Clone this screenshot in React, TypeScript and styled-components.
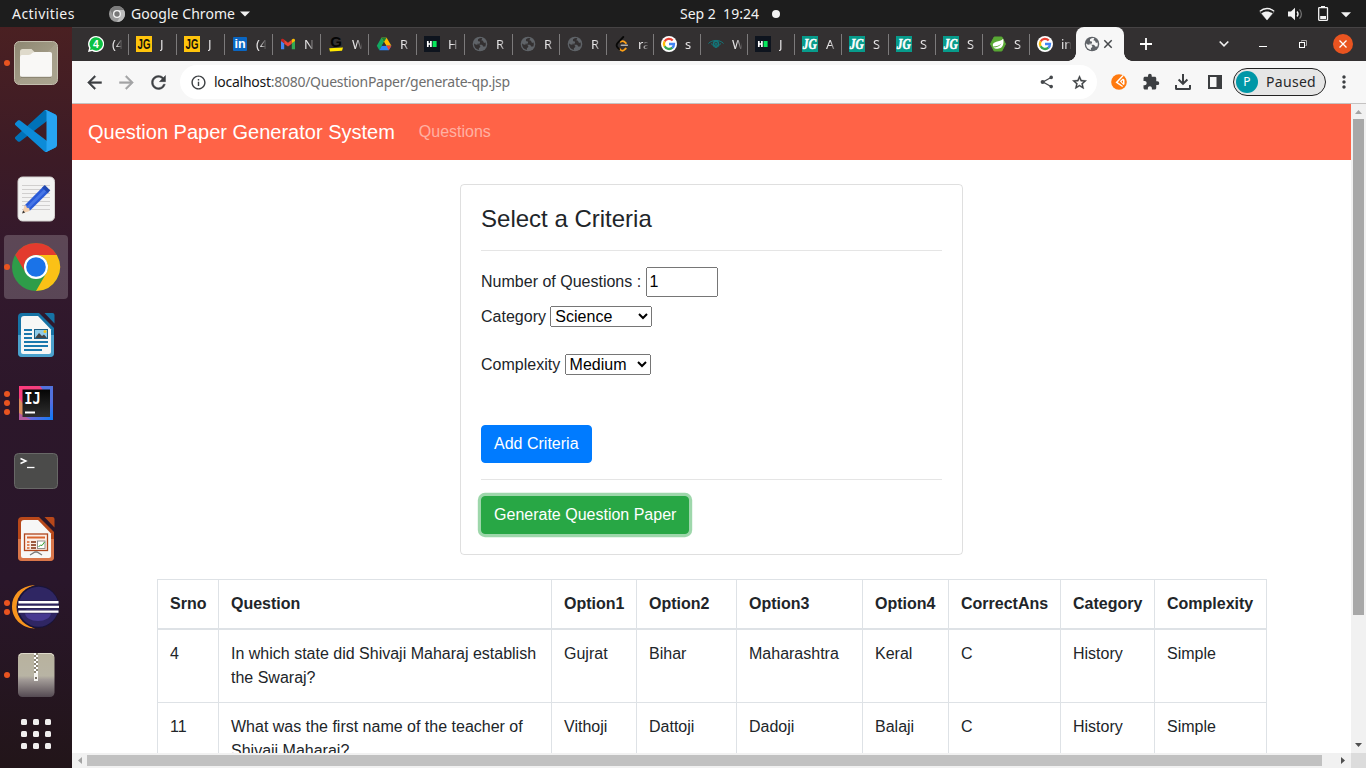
import React from "react";
import styled, { createGlobalStyle } from "styled-components";
import { MdArrowBack, MdArrowForward, MdRefresh, MdInfoOutline, MdStarBorder, MdExtension, MdMoreVert } from "react-icons/md";

const GlobalStyle = createGlobalStyle`
  *, *::before, *::after { box-sizing: border-box; }
  body { margin: 0; overflow: hidden; font-family: "Liberation Sans", Arial, sans-serif; }
  svg { display: block; flex: none; }
`;

const uiFont = `"Noto Sans", "Open Sans", sans-serif`;

/* ---------- desktop shell ---------- */

const Desktop = styled.div`
  width: 1366px;
  height: 768px;
  display: flex;
  flex-direction: column;
  overflow: hidden;
  background: #fff;
`;

const TopBar = styled.header`
  height: 27px;
  flex: none;
  display: flex;
  align-items: center;
  background: #1d1d1d;
  color: #f2f2f2;
  font: 14px/27px ${uiFont};
  white-space: nowrap;
`;

const TopLeft = styled.div`
  width: 680px;
  padding-left: 12px;
  display: flex;
  align-items: center;
`;

const TopLabel = styled.span<{ $w: number; $ml?: number; $mr?: number; $track?: number }>`
  width: ${(p) => p.$w}px;
  margin-left: ${(p) => p.$ml ?? 0}px;
  margin-right: ${(p) => p.$mr ?? 0}px;
  letter-spacing: ${(p) => p.$track ?? 0}px;
`;

const TopRight = styled.div`
  margin-left: auto;
  padding-right: 15px;
  display: flex;
  align-items: center;
`;

const Body = styled.div`
  flex: 1;
  min-height: 0;
  display: flex;
`;

/* ---------- dock ---------- */

const Dock = styled.nav`
  width: 72px;
  flex: none;
  display: flex;
  flex-direction: column;
  align-items: center;
  gap: 4px;
  padding-top: 4px;
  background: linear-gradient(#4a2022 0, #3c1b26 18%, #33192d 31%, #2c172a 50%, #29162a 75%, #221519 100%);
`;

const DockItem = styled.div<{ $active?: boolean }>`
  position: relative;
  width: 64px;
  height: 64px;
  border-radius: 4px;
  background: ${(p) => (p.$active ? "rgba(255,255,255,.2)" : "none")};
`;

const RunDots = styled.div`
  position: absolute;
  left: 0;
  top: 0;
  height: 64px;
  display: flex;
  flex-direction: column;
  justify-content: center;
  gap: 3px;
`;

const RunDot = styled.i`
  width: 6px;
  height: 6px;
  border-radius: 50%;
  background: #e95420;
`;

const AppsGrid = styled.div`
  display: grid;
  grid-template-columns: repeat(3, 6px);
  gap: 6px;
  margin-top: 8px;
`;

const AppsDot = styled.i`
  height: 6px;
  border-radius: 1.5px;
  background: #f0eeee;
`;

/* ---------- browser ---------- */

const Browser = styled.main`
  flex: 1;
  min-width: 0;
  display: flex;
  flex-direction: column;
`;

const TabStrip = styled.div`
  height: 34px;
  flex: none;
  display: flex;
  padding-left: 9px;
  background: #333031;
  box-shadow: inset 0 1px #464344;
`;

const TabCell = styled.div<{ $w: number; $last?: boolean }>`
  width: ${(p) => p.$w}px;
  height: 34px;
  flex: none;
  display: flex;
  align-items: center;
  padding-left: 7px;
  background: linear-gradient(#7c7a7b, #7c7a7b) ${(p) => (p.$last ? "100px" : "100%")} 7px / 1px 21px no-repeat;
`;

const TabTitle = styled.span`
  width: 10px;
  margin-left: 8px;
  overflow: hidden;
  white-space: nowrap;
  font: 13px/18px ${uiFont};
  color: #e6e4e5;
  mask-image: linear-gradient(90deg, #000 45%, transparent 105%);
`;

const ActiveTab = styled.div`
  position: relative;
  width: 48px;
  height: 34px;
  flex: none;
  display: flex;
  align-items: center;
  gap: 3px;
  padding-left: 8px;
  border-radius: 8px 8px 0 0;
  background: #f7f7f7;
  &::before, &::after {
    content: "";
    position: absolute;
    bottom: 0;
    width: 8px;
    height: 8px;
  }
  &::before { left: -8px; background: radial-gradient(circle at 0 0, transparent 7.5px, #f7f7f7 8px); }
  &::after { right: -8px; background: radial-gradient(circle at 100% 0, transparent 7.5px, #f7f7f7 8px); }
`;

const WindowButtons = styled.div`
  flex: 1;
  display: flex;
  align-items: center;
`;

const StripSlot = styled.div<{ $w: number; $ml?: number }>`
  width: ${(p) => p.$w}px;
  margin-left: ${(p) => p.$ml ?? 0}px;
  flex: none;
  display: flex;
  justify-content: center;
`;

const Toolbar = styled.div`
  height: 43px;
  flex: none;
  display: flex;
  align-items: center;
  padding-left: 6px;
  background: #f7f7f7;
  border-bottom: 1px solid #c4c2c1;
  color: #3c3f42;
`;

const Slot = styled.div<{ $color?: string; $bold?: boolean }>`
  width: 32px;
  flex: none;
  display: flex;
  justify-content: center;
  color: ${(p) => p.$color ?? "inherit"};
  path:not([fill="none"]) { stroke-width: ${(p) => (p.$bold ? 0.5 : 0)}; }
  path[fill="none"] { stroke-width: 0; }
`;

const Omnibox = styled.div`
  width: 917px;
  height: 34px;
  margin: 0 6px;
  flex: none;
  display: flex;
  align-items: center;
  padding: 0 2px;
  border-radius: 17px;
  background: #fff;
`;

const Url = styled.div`
  flex: 1;
  font: 14px/20px ${uiFont};
  letter-spacing: -0.27px;
  color: #6e6e6e;
  b { font-weight: 400; color: #161616; }
`;

const ProfilePill = styled.div`
  width: 93px;
  height: 28px;
  margin: 0 2px;
  flex: none;
  display: flex;
  align-items: center;
  padding-left: 2px;
  border: 1px solid #222;
  border-radius: 14px;
  background: #e6e6e6;
  color: #26282b;
  font: 14px/20px ${uiFont};
  letter-spacing: 0.3px;
`;

const Avatar = styled.span`
  width: 22px;
  height: 22px;
  margin-right: 8px;
  border-radius: 50%;
  background: #0097a7;
  color: #fff;
  font-size: 12px;
  line-height: 22px;
  text-align: center;
`;

const PageArea = styled.div`
  flex: 1;
  min-height: 0;
  display: grid;
  grid-template: minmax(0, 1fr) 15px / minmax(0, 1fr) 15px;
`;

const Viewport = styled.div`
  overflow: hidden;
  background: #fff;
  color: #212529;
  font-size: 16px;
  line-height: 24px;
`;

const VScroll = styled.div`
  display: flex;
  flex-direction: column;
  align-items: center;
  background: #f1f1f1;
`;

const HScroll = styled.div`
  display: flex;
  align-items: center;
  background: #f1f1f1;
`;

const VThumb = styled.div`
  width: 11px;
  height: 496px;
  margin-bottom: auto;
  background: #a8a8a8;
`;

const HThumb = styled.div`
  width: 1235px;
  height: 11px;
  margin-right: auto;
  background: #c1c1c1;
`;

const ScrollCorner = styled.div`
  background: #dcdcdc;
`;

/* ---------- web page ---------- */

const Navbar = styled.div`
  height: 56px;
  display: flex;
  align-items: center;
  padding: 0 16px;
  background: #ff6347;
`;

const Brand = styled.span`
  margin-right: 24px;
  font-size: 20px;
  line-height: 30px;
  color: #fff;
`;

const NavLink = styled.span`
  color: rgba(255, 255, 255, 0.5);
`;

const Card = styled.section`
  width: 502.9px;
  height: 371px;
  margin: 24px auto;
  padding: 20px;
  border: 1px solid rgba(0, 0, 0, 0.125);
  border-radius: 4px;
`;

const CardTitle = styled.h4`
  margin: 0;
  font-size: 24px;
  font-weight: 500;
  line-height: 28.8px;
`;

const Divider = styled.hr`
  margin: 16px 0;
  border: 0;
  border-top: 1px solid rgba(0, 0, 0, 0.1);
`;

const FormRow = styled.label<{ $h: number; $mb: number }>`
  height: ${(p) => p.$h}px;
  margin-bottom: ${(p) => p.$mb}px;
  display: flex;
  align-items: baseline;
  gap: 4.4px;
`;

const NumberField = styled.input`
  width: 72px;
  height: 30px;
  font: 16px "Liberation Sans", Arial, sans-serif;
`;

const Picker = styled.select<{ $w: number }>`
  width: ${(p) => p.$w}px;
  height: 21px;
  font: 16px "Liberation Sans", Arial, sans-serif;
`;

/* a 21px line box keeps the label on the select's baseline */
const PickerRow = styled(FormRow)`
  line-height: 21px;
`;

const Button = styled.button<{ $color: string; $ring?: string }>`
  display: block;
  height: 38px;
  padding: 6px 12px;
  border: 1px solid ${(p) => p.$color};
  border-radius: 4px;
  background: ${(p) => p.$color};
  color: #fff;
  font: 16px/24px "Liberation Sans", Arial, sans-serif;
  box-shadow: ${(p) => (p.$ring ? `0 0 0 3.2px ${p.$ring}` : "none")};
`;

const QuestionTable = styled.table`
  width: 1109px;
  margin: 0 85px;
  table-layout: fixed;
  border-collapse: collapse;
  border: 1px solid #dee2e6;
`;

const Th = styled.th<{ $w: number }>`
  width: ${(p) => p.$w}px;
  padding: 12px;
  border: 1px solid #dee2e6;
  border-bottom-width: 2px;
  text-align: left;
  white-space: nowrap;
`;

const Td = styled.td`
  padding: 12px;
  border: 1px solid #dee2e6;
  vertical-align: top;
`;

/* ---------- favicons ---------- */

const Globe = ({ cut = "#333031" }: { cut?: string }) => (
  <svg width="16" height="16" viewBox="0 0 16 16">
    <circle cx="8" cy="8" r="7.3" fill="#5f6368" />
    <path d="M9.300 2.100C7.200 2 5.900 3 5.900 4.300c0 1 .8 1.300 2.100 1.300v1.200c0 .8-.5 1-1.500 1H5.300v.9h3.600c1.300 0 2 .7 2.200 1.700h2.300c.5-1.300.6-2.700.2-4.100-.9 1-2 .6-2.200-.6-.1-.9-.7-1.200-1.900-1.200 0-1 .7-1.200.7-2.200Z" fill={cut} />
    <path d="M2.100 7.300c1.200 1.500 2.300 1.600 4.200 1.600 1.500 0 2 .6 2 1.700 0 .9-.6 1.200-1.400 1.200v2.100C3.800 13.400 1.800 10.700 2.100 7.300Z" fill={cut} />
  </svg>
);

const WhatsApp = () => (
  <svg width="16" height="16" viewBox="0 0 16 16">
    <path d="M8 0a8 8 0 1 1-3.8 15L0 16l1.1-4A8 8 0 0 1 8 0Z" fill="#fff" />
    <path d="M8 1.3A6.7 6.7 0 1 1 4.5 13.6L2 14.1l.6-2.4A6.7 6.7 0 0 1 8 1.3Z" fill="#0cc143" />
    <text x="8" y="11.8" textAnchor="middle" fontFamily="Liberation Sans" fontWeight="700" fontSize="10.5" fill="#fff">4</text>
  </svg>
);

const LinkedIn = () => (
  <svg width="16" height="16" viewBox="0 0 16 16">
    <rect x="1" y="1" width="14" height="14" rx="1" fill="#0a66c2" />
    <text x="8" y="12.4" textAnchor="middle" fontFamily="Liberation Sans" fontWeight="700" fontSize="12.5" fill="#fff">in</text>
  </svg>
);

const Gmail = () => (
  <svg width="16" height="16" viewBox="0 0 16 16">
    <path d="M1 13.3V4.7l3.2 2.4v6.2Z" fill="#4285f4" />
    <path d="M15 13.3V4.7l-3.2 2.4v6.2Z" fill="#34a853" />
    <path d="m4.2 3.7 3.8 3 3.8-3v4L8 10.6 4.2 7.7Z" fill="#ea4335" />
    <path d="M1 4.2c0-1.6 1.8-2 3.2-.8v3.9L1 4.9Z" fill="#c5221f" />
    <path d="M15 4.2c0-1.6-1.8-2-3.2-.8v3.9L15 4.9Z" fill="#fbbc04" />
  </svg>
);

const Grailed = () => (
  <svg width="16" height="16" viewBox="0 0 16 16">
    <path d="m1.2 12.3 13.8-.9-1 3.4-12 .7Z" fill="#ffe800" />
    <text x="8" y="11" textAnchor="middle" fontFamily="Liberation Sans" fontWeight="700" fontSize="15" fill="#050505">G</text>
  </svg>
);

const Drive = () => (
  <svg width="16" height="16" viewBox="0 0 16 16">
    <path d="M5.4 1.8h5.2L8 6.1 3.3 14.2.8 9.8Z" fill="#11a861" />
    <path d="M5.4 1.8h5.2l4.8 8H10.3Z" fill="#ffba00" />
    <path d="M3.3 14.2 5.8 9.8h9.6l-2.6 4.4Z" fill="#2684fc" />
    <path d="m8 6.1 2.2 3.7H5.8Z" fill="#333031" />
    <path d="m12.8 14.2 2.6-4.4h-5.1Z" fill="#ea4335" />
    <path d="M5.4 1.8h5.2L8 6.1Z" fill="#188038" />
  </svg>
);

const HackerRank = () => (
  <svg width="16" height="16" viewBox="0 0 16 16">
    <rect width="16" height="16" fill="#0e141e" />
    <path d="M3.8 5v6M6.9 5v6M3.8 8h3" stroke="#fff" strokeWidth="1.7" />
    <rect x="8.6" y="5" width="4" height="6" fill="#05e85c" />
  </svg>
);

const LeetCode = () => (
  <svg width="16" height="16" viewBox="0 0 16 16" fill="none" strokeLinecap="round" strokeLinejoin="round" strokeWidth="1.8">
    <path d="m5.600 12.900 1 1c1.200 1 2.600 1 3.700 0l1.500-1.400M6.500 5.800c1.400-1 2.700-1 4 0l1.400 1.400" stroke="#ffa116" />
    <path d="M9.300 1 3.700 6.800c-1.300 1.500-1.300 3.400 0 4.800l1.500 1.500" stroke="#070706" />
    <path d="M7.300 9.300h6" stroke="#b3b1b0" strokeWidth="1.5" />
  </svg>
);

const GoogleG = () => (
  <svg width="16" height="16" viewBox="0 0 16 16">
    <circle cx="8" cy="8" r="8" fill="#fff" />
    <g fill="none" strokeWidth="2.3">
      <path d="M3.6 5.5A5 5 0 0 1 11.7 4.6" stroke="#ea4335" />
      <path d="M3.6 10.4A5 5 0 0 1 3.6 5.4" stroke="#fbbc05" />
      <path d="M11.4 11.7A5 5 0 0 1 3.6 10.3" stroke="#34a853" />
      <path d="M8 8h5A5 5 0 0 1 11.3 11.8" stroke="#4285f4" />
    </g>
  </svg>
);

const Eye = () => (
  <svg width="16" height="16" viewBox="0 0 16 16" fill="none" stroke="#137579">
    <path d="M.4 7.500C4.500 3.400 11.500 3.400 15.600 7.500M3 7.600c2 .5 2.500 4 5 4s3-3.500 5-4" strokeWidth="1" />
    <circle cx="8" cy="7.8" r="2.5" strokeWidth="1.6" />
    <circle cx="8" cy="7.8" r=".8" fill="#137579" />
  </svg>
);

const Spring = () => (
  <svg width="16" height="16" viewBox="0 0 16 16">
    <path d="M4.2 1h7.6L15.500 8l-3.700 7H4.2L.5 8Z" fill="#59a834" stroke="#59a834" strokeLinejoin="round" />
    <path d="M13.2 2.8c.8 4.5.2 9.7-5.4 9.9-2 .1-3.400-.4-4.600-1.300 3.800-.1 6.700-1.400 8.300-4C9.400 9.400 7 10.300 3 10.600 1.500 4.500 10 6.500 13.200 2.800Z" fill="#fff" />
  </svg>
);

/* square monogram icon; the letters are squeezed to the width of the square */
const Monogram = ({ bg, fg, script }: { bg: string; fg: string; script?: boolean }) => (
  <svg width="16" height="16" viewBox="0 0 16 16">
    <rect width="16" height="16" fill={bg} />
    <text
      x={script ? 0.8 : 1.6}
      y={script ? 12.6 : 13.2}
      textLength={script ? 14 : 12.8}
      lengthAdjust="spacingAndGlyphs"
      fontFamily={script ? "Liberation Serif" : "Liberation Sans"}
      fontStyle={script ? "italic" : "normal"}
      fontWeight="700"
      fontSize={script ? 15 : 14.5}
      fill={fg}
      stroke={fg}
      strokeWidth={script ? 0.5 : 0}
    >
      JG
    </text>
  </svg>
);

const YellowJG = () => <Monogram bg="#ffc40c" fg="#15120a" />;
const TealJG = () => <Monogram bg="#079b8b" fg="#fff" script />;

const tabs: { icon: React.FC; title: string }[] = [
  { icon: WhatsApp, title: "(4" },
  { icon: YellowJG, title: "J" },
  { icon: YellowJG, title: "J" },
  { icon: LinkedIn, title: "(4" },
  { icon: Gmail, title: "N" },
  { icon: Grailed, title: "W" },
  { icon: Drive, title: "R" },
  { icon: HackerRank, title: "H" },
  { icon: Globe, title: "R" },
  { icon: Globe, title: "R" },
  { icon: Globe, title: "R" },
  { icon: LeetCode, title: "ra" },
  { icon: GoogleG, title: "s" },
  { icon: Eye, title: "W" },
  { icon: HackerRank, title: "J" },
  { icon: TealJG, title: "A" },
  { icon: TealJG, title: "S" },
  { icon: TealJG, title: "S" },
  { icon: TealJG, title: "S" },
  { icon: Spring, title: "S" },
  { icon: GoogleG, title: "in" },
];

/* ---------- dock icons ---------- */

const Icon64 = ({ children }: { children: React.ReactNode }) => (
  <svg width="64" height="64" viewBox="0 0 64 64">{children}</svg>
);

const Files = () => (
  <Icon64>
    <defs>
      <linearGradient id="files" x2="1" y2="1"><stop stopColor="#8d8772" /><stop offset=".5" stopColor="#9f9883" /><stop offset=".51" stopColor="#a69f8b" /><stop offset="1" stopColor="#aaa48f" /></linearGradient>
    </defs>
    <rect x="10.5" y="10.5" width="43" height="43" rx="5" fill="url(#files)" stroke="#c4beae" />
    <path d="M16 24v-3.500c0-1.500 1-2.500 2.500-2.500h9l3.500 3.500v4H16Z" fill="#dfdacb" />
    <path d="M16 26c0-1 .8-2 2-2h6.500c3.500 0 3-3 6.500-3h15c1.200 0 2 .8 2 2v21c0 1.200-.8 2-2 2H18c-1.200 0-2-.8-2-2Z" fill="#f9f8f6" />
    <path d="M17 46.300h30" stroke="#7f7965" strokeWidth=".8" />
  </Icon64>
);

const VSCode = () => (
  <Icon64>
    <g transform="translate(11 11) scale(.42)">
      <path d="M96.461 10.796 75.857.876C73.472-.273 70.622.212 68.75 2.083L1.299 63.583c-1.814 1.654-1.812 4.511.004 6.162l5.51 5.009c1.485 1.35 3.722 1.45 5.321.237L93.361 13.369C96.086 11.302 100 13.246 100 16.667Z" fill="#0072b8" />
      <path d="M96.461 89.204 75.857 99.124c-2.385 1.149-5.235.664-7.107-1.208L1.299 36.417c-1.815-1.654-1.812-4.511.004-6.162l5.51-5.009c1.485-1.35 3.722-1.45 5.321-.237l81.227 61.622C96.086 88.698 100 86.754 100 83.333Z" fill="#0c8bd8" />
      <path d="M75.858 99.126c-2.386 1.148-5.236.662-7.108-1.21 2.306 2.307 6.25.673 6.25-2.588V4.672c0-3.261-3.943-4.895-6.25-2.589 1.872-1.872 4.722-2.357 7.108-1.21l20.6 9.907C98.623 11.822 100 14.011 100 16.413v67.174c0 2.402-1.377 4.591-3.542 5.633Z" fill="#27a4f2" />
    </g>
  </Icon64>
);

const TextEditor = () => (
  <Icon64>
    <rect x="14" y="10" width="36.5" height="44" rx="4.5" fill="#f3f3f2" stroke="#d4d2d0" />
    <path d="M18 18.500h28M18 22.500h28M18 26.500h28M18 30.500h28M18 34.500h28M18 38.500h28M18 42.500h28" stroke="#d0cfce" />
    <path d="m18.200 46.500 2.300-8 5.300 5.300Z" fill="#f3cfae" />
    <path d="m18.200 46.500.9-3 2 2Z" fill="#333" />
    <path d="m20.500 38.500 18.800-19 5.500 5.500-19 18.800Z" fill="#2a5bd7" />
    <path d="m22.200 40.200 19-19 2 2-19 19Z" fill="#4676e6" />
    <path d="m38.200 20.500 2.600-2.600 5.500 5.500-2.600 2.600Z" fill="#2049b2" />
    <path d="m20.500 38.500 1.700-.2.500 2.400 2.500.5.600 2.600-2.500.7-3.200-3.400Z" fill="#f3cfae" />
  </Icon64>
);

const Chrome = ({ size = 64, mono = false }: { size?: number; mono?: boolean }) => (
  <svg width={size} height={size} viewBox={mono ? "8 8 48 48" : "0 0 64 64"}>
    <circle cx="32" cy="32" r="24" fill={mono ? "#9a9a9a" : "#2e9d49"} />
    <path d="M11.200 20A24 24 0 0 1 52.800 20H32a12 12 0 0 0-10.400 18Z" fill={mono ? "#7c7c7c" : "#e33b2e"} />
    <path d="M52.800 20A24 24 0 0 1 32 56L42.400 38A12 12 0 0 0 32 20Z" fill={mono ? "#bdbdbd" : "#fbc116"} />
    <circle cx="32" cy="32" r="12" fill={mono ? "#f5f5f5" : "#fff"} />
    <circle cx="32" cy="32" r={mono ? 8 : 9.8} fill={mono ? "#777" : "#1a73e8"} />
  </svg>
);

const OfficeSheet = ({ dark, light, children }: { dark: string; light: string; children: React.ReactNode }) => (
  <Icon64>
    <path d="M18 10h17l15 15v25a4 4 0 0 1-4 4H18a4 4 0 0 1-4-4V14a4 4 0 0 1 4-4Z" fill={dark} />
    <path d="M14 32h36v18a4 4 0 0 1-4 4H18a4 4 0 0 1-4-4Z" fill={light} />
    <path d="M20 13h14l13 13.500V49a2 2 0 0 1-2 2H19a2 2 0 0 1-2-2V16a3 3 0 0 1 3-3Z" fill="#f7f7f6" />
    <path d="M40.500 10h8a2 2 0 0 1 2 2v8.500Z" fill={dark} />
    {children}
  </Icon64>
);

const Writer = () => (
  <OfficeSheet dark="#1673a5" light="#4ba1cc">
    <path d="M20 27h8M20 31h8M20 35h8M20 39h24M20 43h24M20 47h18" stroke="#1b78ad" strokeWidth="2" />
    <rect x="30.5" y="26.5" width="13" height="9" fill="#8fcbe8" stroke="#1b5f86" />
    <circle cx="41" cy="28.5" r="1.5" fill="#f5c315" />
    <path d="m31 35 4-5 3 3 2-1.500 3 3.500Z" fill="#444" />
  </OfficeSheet>
);

const Impress = () => (
  <OfficeSheet dark="#b8481a" light="#d9764a">
    <rect x="20.5" y="27" width="23" height="16.5" fill="#fbeee7" stroke="#b0461c" strokeWidth="1.3" />
    <path d="M23 30.500h18" stroke="#d9652f" strokeWidth="2" />
    <path d="M23 35h2.500M23 38h2.500M23 41h2.500" stroke="#d9652f" strokeWidth="1.7" />
    <path d="M27 35h5M27 38h5M27 41h5" stroke="#7d2b0d" strokeWidth="1.7" />
    <rect x="33.5" y="34" width="7.5" height="7.5" fill="#fff" stroke="#777" strokeWidth=".8" />
    <path d="m34.500 40 2-2 1.500.5 2.500-3.500" stroke="#2d9c2d" fill="none" />
    <path d="m26 48 5-3h2l5 3" stroke="#777" strokeWidth="1.3" fill="none" />
  </OfficeSheet>
);

const IntelliJ = () => (
  <Icon64>
    <defs>
      <linearGradient id="ij" x2="1" y2="1"><stop stopColor="#ff3a7c" /><stop offset=".35" stopColor="#f0417f" /><stop offset=".6" stopColor="#7367d8" /><stop offset="1" stopColor="#087cfa" /></linearGradient>
      <linearGradient id="ijin" x2="0" y2="1"><stop stopColor="#050505" /><stop offset="1" stopColor="#2f2f2f" /></linearGradient>
    </defs>
    <rect x="15" y="15" width="34" height="34" fill="url(#ij)" />
    <path d="M15 27 20 34v9l-5 6Z" fill="#d98a5c" />
    <path d="M15 42 27 49H15Z" fill="#b55c9c" />
    <path d="M36 15h13v17Z" fill="#5272dd" />
    <rect x="18.5" y="18.5" width="27.5" height="27.5" fill="url(#ijin)" />
    <path d="M21 41.500h10" stroke="#fff" strokeWidth="2" />
    <text x="20.300" y="33" textLength="16.500" lengthAdjust="spacingAndGlyphs" fontFamily="DejaVu Sans Mono" fontWeight="700" fontSize="16" fill="#fff">IJ</text>
  </Icon64>
);

const Terminal = () => (
  <Icon64>
    <rect x="10.5" y="14.5" width="43" height="35" rx="4" fill="#4b4b4a" stroke="#686867" />
    <path d="m16.500 19.500 5.500 2.500-5.500 2.500" stroke="#fff" strokeWidth="1.4" fill="none" />
    <path d="M23 28.500h7.500" stroke="#fff" strokeWidth="1.3" />
  </Icon64>
);

const Eclipse = () => (
  <Icon64>
    <path d="M31 10C16 11 8 20 8 31.500S17 53 31 53.500C12 47 12 16 31 10Z" fill="#f7941e" />
    <circle cx="33.8" cy="31.7" r="21.3" fill="#18143a" />
    <circle cx="34.5" cy="31.7" r="20" fill="#2f2663" />
    <ellipse cx="34" cy="38" rx="13" ry="8" fill="#473a91" />
    <path d="M14 27.200h40.500M13.500 31.900h41M14 36.600h40.500" stroke="#2a2253" strokeWidth="4" />
    <path d="M14.500 27.200h40M14 31.900h41M14.500 36.600h40" stroke="#fff" strokeWidth="2.4" />
  </Icon64>
);

const Archive = () => (
  <Icon64>
    <defs>
      <linearGradient id="arc" x2="0" y2="1"><stop stopColor="#b8b29e" /><stop offset=".52" stopColor="#b8b4a4" /><stop offset=".6" stopColor="#a39c98" /><stop offset="1" stopColor="#544a52" /></linearGradient>
    </defs>
    <rect x="14" y="10" width="36.5" height="44" rx="4.5" fill="url(#arc)" />
    <path d="M15 13c.5-1.500 1.500-2.500 3.500-2.500h27.500c2 0 3 1 3.500 2.500" stroke="#dedacb" fill="none" />
    <rect x="30" y="10" width="4" height="20" fill="#8b8575" />
    <path d="M31 10v20" stroke="#fff" strokeWidth="2" strokeDasharray="2 2" />
    <path d="M33 12v18" stroke="#fff" strokeWidth="2" strokeDasharray="2 2" />
    <path d="M30 30h4v8h-4Z" fill="#f4f3ef" />
    <rect x="31" y="34" width="2" height="2" fill="#777064" />
  </Icon64>
);

const dockApps: { icon: React.FC; dots: number; active?: boolean }[] = [
  { icon: Files, dots: 1 },
  { icon: VSCode, dots: 0 },
  { icon: TextEditor, dots: 0 },
  { icon: Chrome, dots: 1, active: true },
  { icon: Writer, dots: 0 },
  { icon: IntelliJ, dots: 3 },
  { icon: Terminal, dots: 0 },
  { icon: Impress, dots: 0 },
  { icon: Eclipse, dots: 2 },
  { icon: Archive, dots: 1 },
];

/* ---------- status icons ---------- */

const Caret = () => <svg width="10" height="6" viewBox="0 0 10 6"><path d="M0 .5h10l-5 5Z" fill="#f2f2f2" /></svg>;

const Status = () => (
  <svg width="92" height="20" viewBox="1259 3 92 20">
    <path d="M1260 10.200c4-3.600 10-3.600 14 0" stroke="#f2f2f2" strokeWidth="1.5" fill="none" />
    <path d="M1259.500 10.500 1267 19l7.500-8.500" fill="none" stroke="#aaa" strokeWidth=".5" />
    <path d="M1261.500 12.500c3.300-2.600 7.700-2.600 11 0l-5.500 6.800Z" fill="#f2f2f2" />
    <path d="M1288 10.500h3l4-3.800v12.600l-4-3.800h-3Z" fill="#f2f2f2" />
    <path d="M1297 10.500c1.300 1.500 1.300 3.500 0 5" stroke="#f2f2f2" strokeWidth="1.3" fill="none" />
    <path d="M1299.500 8.300c2.500 2.700 2.500 6.700 0 9.400" stroke="#777" strokeWidth="1.2" fill="none" />
    <rect x="1318.7" y="6.7" width="8.8" height="12.6" rx=".5" fill="none" stroke="#f2f2f2" strokeWidth="1.3" />
    <path d="M1321 5h4v1.500h-4ZM1320.200 15h5.800v3h-5.800Z" fill="#f2f2f2" />
    <path d="M1341 11.200h10l-5 5Z" fill="#f2f2f2" />
  </svg>
);

const Arrow = ({ dir, color }: { dir: number; color: string }) => (
  <svg width="15" height="15" viewBox="0 0 15 15">
    <path d="M4 10 7.500 6 11 10Z" fill={color} transform={`rotate(${dir} 7.5 7.5)`} />
  </svg>
);

const columns: [string, number][] = [
  ["Srno", 61], ["Question", 333], ["Option1", 85], ["Option2", 100], ["Option3", 126],
  ["Option4", 86], ["CorrectAns", 112], ["Category", 94], ["Complexity", 112],
];

const rows = [
  ["4", "In which state did Shivaji Maharaj establish the Swaraj?", "Gujrat", "Bihar", "Maharashtra", "Keral", "C", "History", "Simple"],
  ["11", "What was the first name of the teacher of Shivaji Maharaj?", "Vithoji", "Dattoji", "Dadoji", "Balaji", "C", "History", "Simple"],
];

export default function App() {
  return (
    <Desktop>
      <GlobalStyle />
      <TopBar>
        <TopLeft>
          <TopLabel $w={63} $mr={34} $track={0.45}>Activities</TopLabel>
          <Chrome size={16} mono />
          <TopLabel $w={104} $ml={6} $mr={5} $track={0.05}>Google Chrome</TopLabel>
          <Caret />
        </TopLeft>
        <TopLabel $w={92} $track={0}>Sep 2&nbsp; 19:24</TopLabel>
        <svg width="8" height="8" viewBox="0 0 8 8"><circle cx="4" cy="4" r="4" fill="#f2f2f2" /></svg>
        <TopRight><Status /></TopRight>
      </TopBar>

      <Body>
        <Dock>
          {dockApps.map(({ icon: Icon, dots, active }, i) => (
            <DockItem key={i} $active={active}>
              <Icon />
              <RunDots>{Array.from({ length: dots }, (_, d) => <RunDot key={d} />)}</RunDots>
            </DockItem>
          ))}
          <AppsGrid>{Array.from({ length: 9 }, (_, i) => <AppsDot key={i} />)}</AppsGrid>
        </Dock>

        <Browser>
          <TabStrip>
            {tabs.map(({ icon: Icon, title }, i) => (
              <TabCell key={i} $w={i < 9 ? 48 : i === 20 ? 46 : 47} $last={i === 20}>
                <Icon />
                <TabTitle>{title}</TabTitle>
              </TabCell>
            ))}
            <ActiveTab>
              <Globe cut="#f7f7f7" />
              <svg width="10" height="10" viewBox="0 0 10 10"><path d="m1.300 1.300 7.400 7.400m0-7.400L1.300 8.700" stroke="#45484b" strokeWidth="1.5" /></svg>
            </ActiveTab>
            <WindowButtons>
              <StripSlot $w={44}><svg width="12" height="12" viewBox="0 0 12 12"><path d="M6 0v12M0 6h12" stroke="#fff" strokeWidth="1.8" /></svg></StripSlot>
              <StripSlot $w={24} $ml={44}><svg width="10" height="8" viewBox="0 0 10 8"><path d="m.7 1.500 4.300 4.300 4.300-4.300" stroke="#eee" strokeWidth="1.7" fill="none" /></svg></StripSlot>
              <StripSlot $w={54}><svg width="8" height="8" viewBox="0 0 8 8"><path d="M0 6.500h8" stroke="#fff" /></svg></StripSlot>
              <StripSlot $w={26}>
                <svg width="8" height="8" viewBox="0 0 8 8" fill="none">
                  <path d="M2.500 1.500v-1h5v5h-1" stroke="#aaa8a8" />
                  <rect x=".5" y="2.5" width="5" height="5" stroke="#fff" />
                </svg>
              </StripSlot>
              <StripSlot $w={20} $ml={17}>
                <svg width="20" height="20" viewBox="0 0 20 20">
                  <circle cx="10" cy="10" r="10" fill="#e95420" />
                  <path d="m6.500 6.500 7 7m0-7-7 7" stroke="#fff" strokeWidth="1.3" />
                </svg>
              </StripSlot>
            </WindowButtons>
          </TabStrip>

          <Toolbar>
            <Slot $bold><MdArrowBack size={21} /></Slot>
            <Slot $bold $color="#a3a4a5"><MdArrowForward size={21} /></Slot>
            <Slot $bold><MdRefresh size={21} /></Slot>
            <Omnibox>
              <Slot><MdInfoOutline size={17} /></Slot>
              <Url><b>localhost</b>:8080/QuestionPaper/generate-qp.jsp</Url>
              <Slot>
                <svg width="14" height="14" viewBox="0 0 14 14" fill="#45484b">
                  <polyline points="11,2.5 3,7 11,11.5" fill="none" stroke="#45484b" strokeWidth="1.3" />
                  <circle cx="11.2" cy="2.4" r="1.8" strokeWidth="0" /><circle cx="2.7" cy="7" r="2.1" /><circle cx="11.2" cy="11.6" r="1.8" />
                </svg>
              </Slot>
              <Slot $bold><MdStarBorder size={17} /></Slot>
            </Omnibox>
            <Slot>
              <svg width="16" height="16" viewBox="0 0 16 16">
                <circle cx="8" cy="8" r="7.8" fill="#ff7a0f" />
                <path d="m11.500 1-7 7.600 6.800 4.500.7-1.200-5.200-3.700 5.700-6.200Z" fill="#fff" />
                <path d="m8.800 7.200 3.200-2.700 1.500 1.200v4.500l-1 .8Zm1.700.3 1.500 1.800V6.200Z" fill="#fff" fillRule="evenodd" />
              </svg>
            </Slot>
            <Slot><MdExtension size={18} /></Slot>
            <Slot>
              <svg width="16" height="16" viewBox="0 0 16 16" fill="#3c3f42">
                <path d="M7 0h2v7.500l2.700-2.700 1.400 1.400L8 11.300 2.900 6.200l1.400-1.400L7 7.500ZM0 11h2v3h12v-3h2v3.500q0 1.500-1.500 1.500h-13Q0 16 0 14.500Z" />
              </svg>
            </Slot>
            <Slot>
              <svg width="14" height="14" viewBox="0 0 14 14"><path d="M0 0h14v14H0ZM2 2v10h6.500V2Z" fill="#3c3e40" fillRule="evenodd" /></svg>
            </Slot>
            <ProfilePill><Avatar>P</Avatar>Paused</ProfilePill>
            <Slot><MdMoreVert size={20} /></Slot>
          </Toolbar>

          <PageArea>
            <Viewport>
              <Navbar>
                <Brand>Question Paper Generator System</Brand>
                <NavLink>Questions</NavLink>
              </Navbar>
              <Card>
                <CardTitle>Select a Criteria</CardTitle>
                <Divider />
                <FormRow $h={30} $mb={9}>Number of Questions : <NumberField defaultValue="1" /></FormRow>
                <PickerRow $h={21} $mb={27}>Category <Picker $w={102}><option>Science</option></Picker></PickerRow>
                <PickerRow $h={21} $mb={50}>Complexity <Picker $w={86}><option>Medium</option></Picker></PickerRow>
                <Button $color="#007bff">Add Criteria</Button>
                <Divider />
                <Button $color="#28a745" $ring="rgba(40,167,69,.45)">Generate Question Paper</Button>
              </Card>
              <QuestionTable>
                <thead><tr>{columns.map(([name, w]) => <Th key={name} $w={w}>{name}</Th>)}</tr></thead>
                <tbody>{rows.map((r) => <tr key={r[0]}>{r.map((c, i) => <Td key={i}>{c}</Td>)}</tr>)}</tbody>
              </QuestionTable>
            </Viewport>
            <VScroll>
              <Arrow dir={0} color="#a3a3a3" />
              <VThumb />
              <Arrow dir={180} color="#505050" />
            </VScroll>
            <HScroll>
              <Arrow dir={-90} color="#a3a3a3" />
              <HThumb />
              <Arrow dir={90} color="#505050" />
            </HScroll>
            <ScrollCorner />
          </PageArea>
        </Browser>
      </Body>
    </Desktop>
  );
}
